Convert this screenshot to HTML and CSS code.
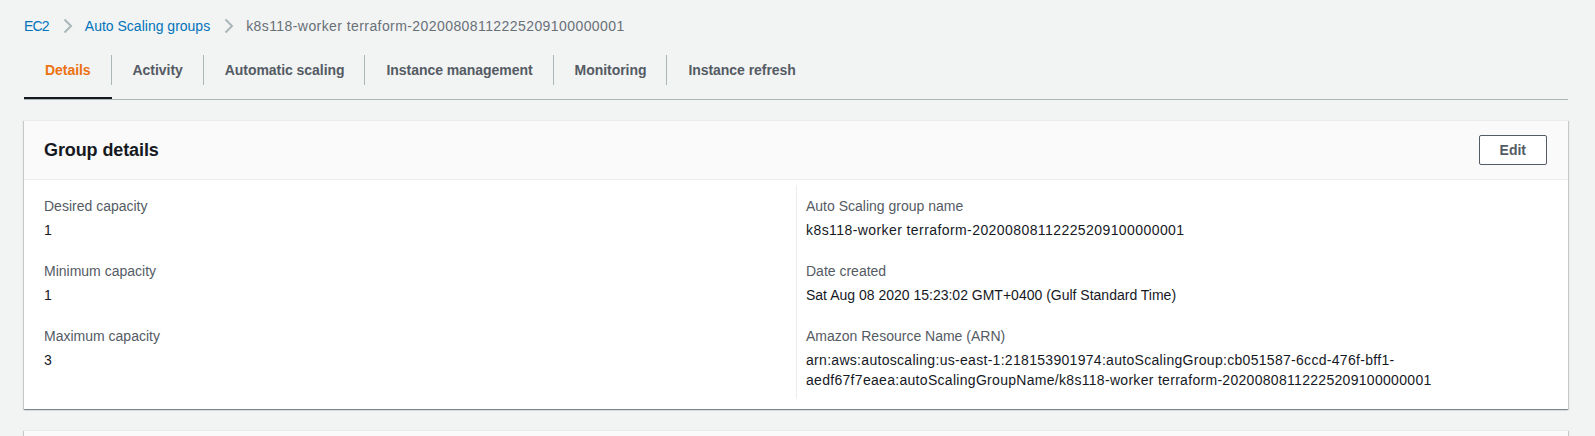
FILE: index.html
```html
<!DOCTYPE html>
<html lang="en">
<head>
<meta charset="utf-8">
<title>k8s118-worker terraform-20200808112225209100000001</title>
<link rel="stylesheet" href="styles.css">
</head>
<body>
<main class="page">
  <nav class="breadcrumbs">
    <a class="crumb-link crumb-short" href="#">EC2</a>
    <span class="crumb-sep"><svg viewBox="0 0 16 16" width="16" height="16"><path d="M4.5 1.5 L11 8 L4.5 14.5" fill="none" stroke="currentColor" stroke-width="2"/></svg></span>
    <a class="crumb-link" href="#">Auto Scaling groups</a>
    <span class="crumb-sep"><svg viewBox="0 0 16 16" width="16" height="16"><path d="M4.5 1.5 L11 8 L4.5 14.5" fill="none" stroke="currentColor" stroke-width="2"/></svg></span>
    <span class="crumb-current id-text">k8s118-worker terraform-20200808112225209100000001</span>
  </nav>

  <div class="tabs">
    <div class="tab tab-active"><span class="tab-label">Details</span></div>
    <div class="tab"><span class="tab-label">Activity</span></div>
    <div class="tab"><span class="tab-label">Automatic scaling</span></div>
    <div class="tab"><span class="tab-label">Instance management</span></div>
    <div class="tab"><span class="tab-label">Monitoring</span></div>
    <div class="tab"><span class="tab-label tab-label-last">Instance refresh</span></div>
  </div>

  <section class="card">
    <header class="card-header">
      <h2 class="card-title">Group details</h2>
      <button class="btn">Edit</button>
    </header>
    <div class="card-body">
      <div class="col">
        <div class="kv">
          <div class="kv-label">Desired capacity</div>
          <div class="kv-value">1</div>
        </div>
        <div class="kv">
          <div class="kv-label">Minimum capacity</div>
          <div class="kv-value">1</div>
        </div>
        <div class="kv">
          <div class="kv-label">Maximum capacity</div>
          <div class="kv-value">3</div>
        </div>
      </div>
      <div class="col col-right">
        <div class="kv">
          <div class="kv-label">Auto Scaling group name</div>
          <div class="kv-value id-text">k8s118-worker terraform-20200808112225209100000001</div>
        </div>
        <div class="kv">
          <div class="kv-label">Date created</div>
          <div class="kv-value">Sat Aug 08 2020 15:23:02 GMT+0400 (Gulf Standard Time)</div>
        </div>
        <div class="kv">
          <div class="kv-label">Amazon Resource Name (ARN)</div>
          <div class="kv-value arn-text">arn:aws:autoscaling:us-east-1:218153901974:autoScalingGroup:cb051587-6ccd-476f-bff1-aedf67f7eaea:autoScalingGroupName/k8s118-worker terraform-20200808112225209100000001</div>
        </div>
      </div>
    </div>
  </section>

  <section class="card card-next">
    <header class="card-header card-header-empty"></header>
  </section>
</main>
</body>
</html>
```

FILE: styles.css
```css
html, body {
  margin: 0;
  padding: 0;
  overflow: hidden;
  background: #f2f3f3;
}

body {
  font-family: "Liberation Sans", Arial, sans-serif;
  font-size: 14px;
  line-height: 20px;
  color: #16191f;
}

.page {
  padding: 16px 27px 0 24px;
}

.breadcrumbs {
  display: flex;
  align-items: center;
  height: 20px;
  line-height: 20px;
}

.crumb-link {
  color: #0073bb;
  text-decoration: none;
}

.crumb-short {
  letter-spacing: -0.8px;
}

.crumb-sep {
  display: flex;
  width: 16px;
  height: 16px;
  margin: 0 9px 0 11px;
  color: #aab7b8;
}

.crumb-current {
  color: #687078;
}

.id-text {
  letter-spacing: 0.42px;
}

.arn-text {
  letter-spacing: 0.3px;
}

.tabs {
  display: flex;
  margin-top: 9px;
  border-bottom: 1px solid #aab7b8;
}

.tab {
  padding: 10px 0 12px;
  border-bottom: 2px solid transparent;
}

.tab-active {
  border-bottom-color: #16191f;
}

.tab-label {
  display: block;
  height: 30px;
  line-height: 30px;
  padding: 0 20px 0 21px;
  border-right: 1px solid #aab7b8;
  font-weight: bold;
  letter-spacing: -0.05px;
  color: #545b64;
}

.tab-label-last {
  border-right: none;
}

.tab-active .tab-label {
  color: #ec7211;
}

.card {
  margin-top: 20px;
  background: #fff;
  border-top: 1px solid #eaeded;
  box-shadow: 0 1px 1px 0 rgba(0, 28, 36, 0.3), 1px 1px 1px 0 rgba(0, 28, 36, 0.15), -1px 1px 1px 0 rgba(0, 28, 36, 0.15);
}

.card-header {
  display: flex;
  align-items: center;
  justify-content: space-between;
  padding: 14px 20px;
  background: #fafafa;
  border-bottom: 1px solid #eaeded;
}

.card-title {
  margin: 0;
  font-size: 18px;
  line-height: 22px;
  font-weight: bold;
  letter-spacing: -0.1px;
  color: #16191f;
}

.btn {
  font-family: "Liberation Sans", Arial, sans-serif;
  font-size: 14px;
  line-height: 20px;
  font-weight: bold;
  color: #545b64;
  background: #fff;
  border: 1px solid #545b64;
  border-radius: 2px;
  padding: 4px 20px;
  margin: 0 1px 0 0;
}

.card-body {
  display: grid;
  grid-template-columns: 1fr 1fr;
  padding: 5px 20px 10px;
}

.col {
  padding: 11px 0 9px;
}

.col-right {
  border-left: 1px solid #eaeded;
  padding-left: 9px;
}

.kv + .kv {
  margin-top: 21px;
}

.kv-label {
  color: #545b64;
}

.kv-value {
  margin-top: 4px;
  color: #16191f;
}

.card-next {
  margin-top: 21px;
}

.card-header-empty {
  height: 30px;
}
```
